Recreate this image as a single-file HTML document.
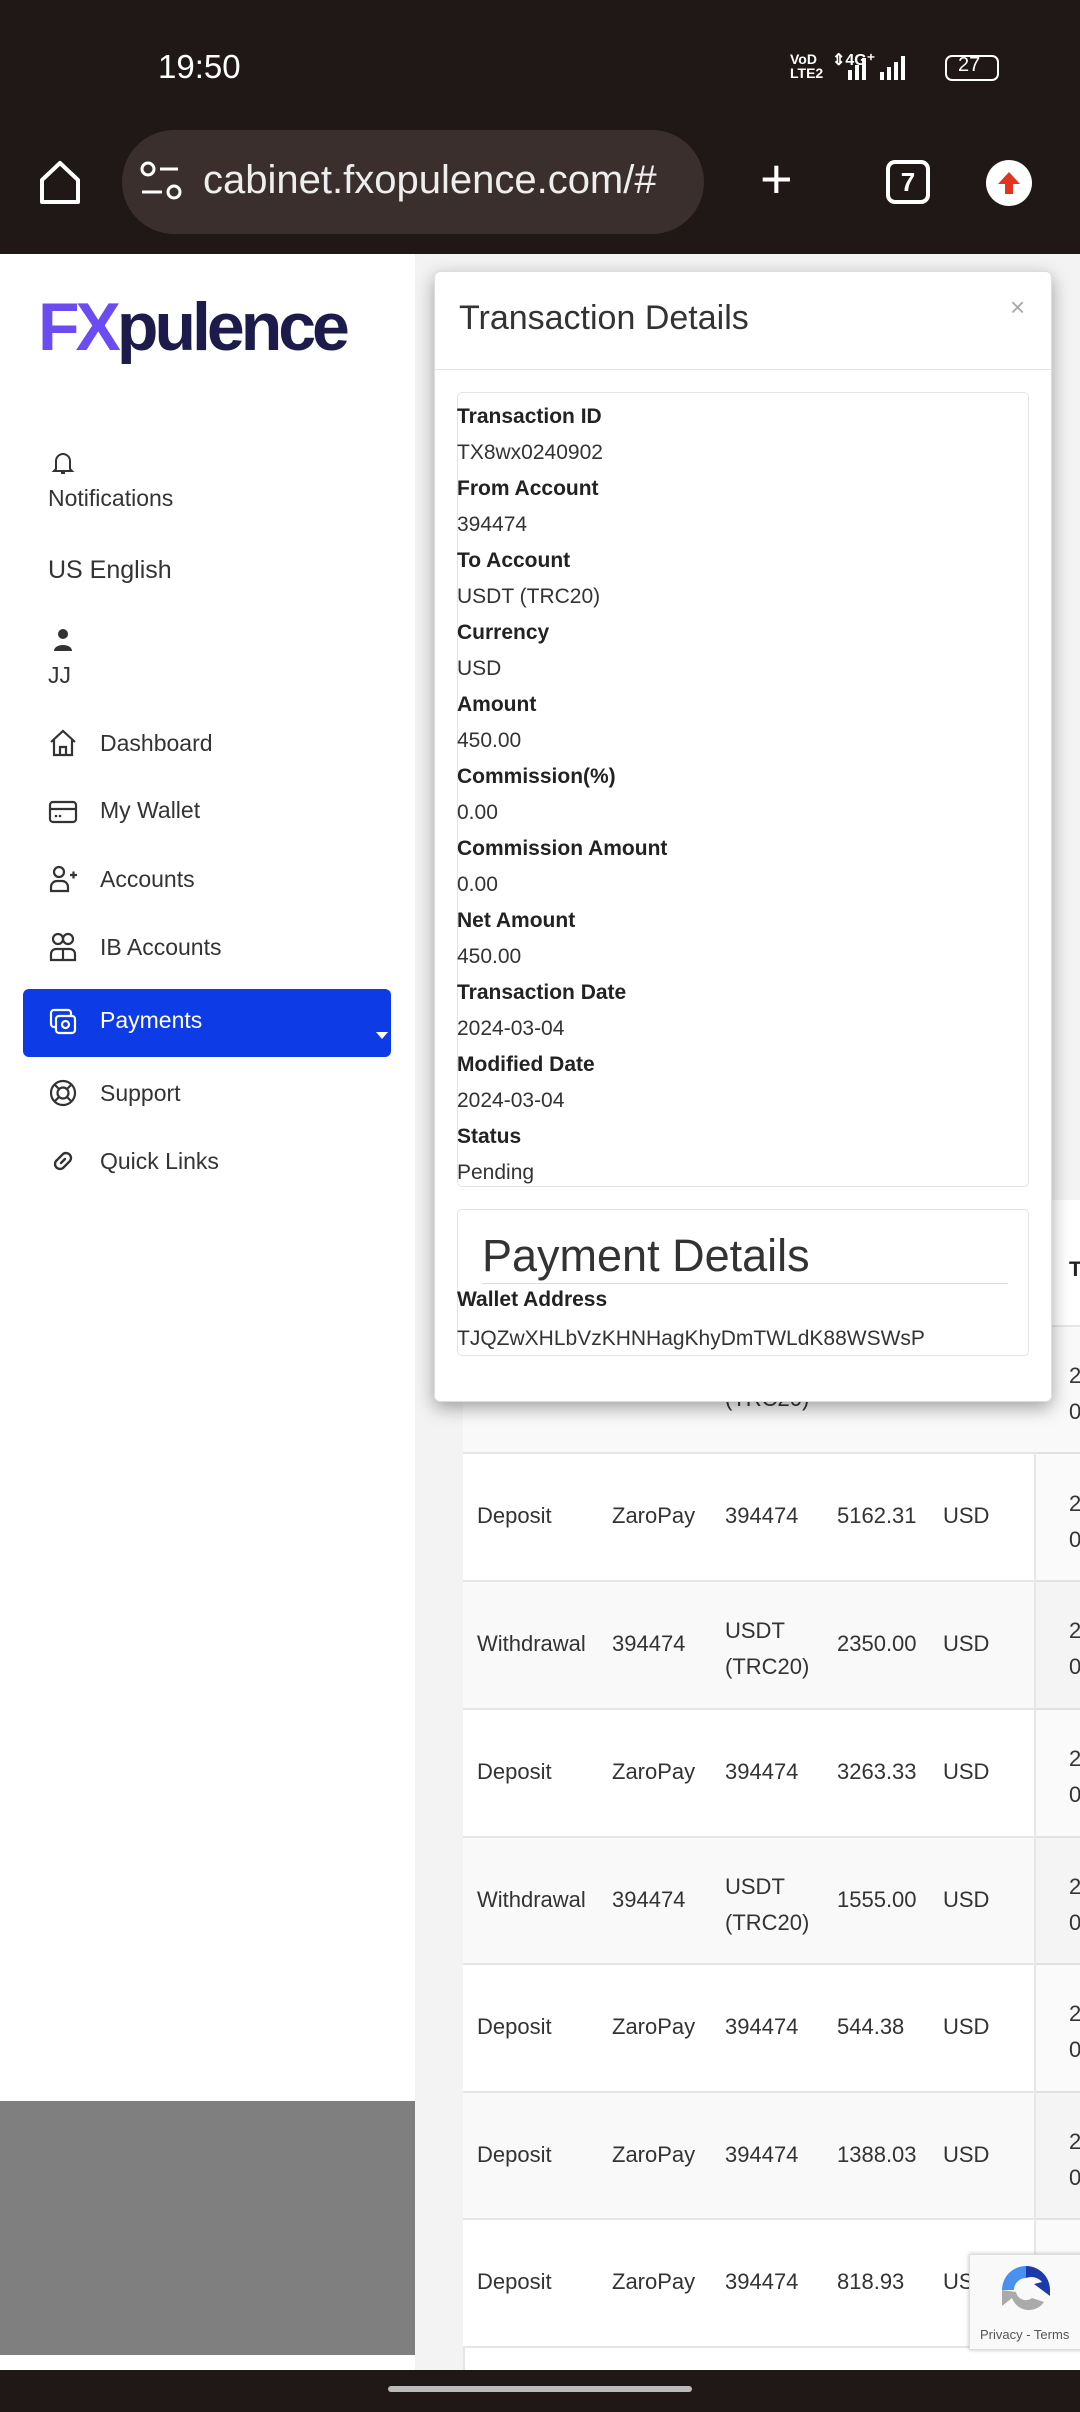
<!DOCTYPE html>
<html><head><meta charset="utf-8"><style>
*{margin:0;padding:0;box-sizing:border-box}
body{width:1080px;height:2412px;position:relative;overflow:hidden;background:#f3f3f3;font-family:"Liberation Sans",sans-serif;color:#333}
.a{position:absolute;white-space:nowrap}
.top{position:absolute;left:0;top:0;width:1080px;height:254px;background:#1f1816}
.side{position:absolute;left:0;top:254px;width:415px;height:2116px;background:#fff}
.nav{font-size:23px;color:#333}
.ic{position:absolute;left:48px;width:30px;height:30px}
.modal{position:absolute;left:434px;top:271px;width:618px;height:1131px;background:#fff;border:1px solid #ddd;border-radius:6px;box-shadow:0 6px 18px rgba(0,0,0,.35)}
.lbl{font-weight:bold;font-size:21px;color:#222}
.val{font-size:21px;color:#333}
.td{font-size:22px;color:#333}
.row{position:absolute;left:463px;width:640px;height:128px;border-top:2px solid #e6e6e6}
</style></head><body>
<div class="top"></div>
<div class="a" style="left:158px;top:48px;font-size:33px;color:#fff">19:50</div>
<div class="a" style="left:790px;top:52px;font-size:14px;color:#fff;line-height:14px;font-weight:bold">VoD<br>LTE2</div>
<div class="a" style="left:832px;top:50px;font-size:16px;color:#fff;font-weight:bold">⇕4G⁺</div>
<svg class="a" style="left:832px;top:52px" width="170" height="30"><g fill="#fff"><rect x="16" y="18" width="4" height="10"/><rect x="23" y="13" width="4" height="15"/><rect x="30" y="6" width="4" height="22"/><rect x="48" y="20" width="4" height="8"/><rect x="55" y="15" width="4" height="13"/><rect x="62" y="10" width="4" height="18"/><rect x="69" y="4" width="4" height="24"/></g><rect x="114" y="4" width="52" height="24" rx="6" fill="none" stroke="#fff" stroke-width="2"/></svg>
<div class="a" style="left:958px;top:54px;font-size:20px;color:#fff">27</div>
<svg class="a" style="left:36px;top:158px" width="50" height="50"><path d="M6 22 L24 5 L42 22 V44 H6 Z" fill="none" stroke="#fff" stroke-width="4" stroke-linejoin="round"/></svg>
<div class="a" style="left:122px;top:130px;width:582px;height:104px;border-radius:52px;background:#3a2f2c"></div>
<svg class="a" style="left:138px;top:160px" width="50" height="45"><circle cx="10" cy="9" r="6" fill="none" stroke="#fff" stroke-width="3"/><path d="M22 9h18M4 32h20" stroke="#fff" stroke-width="3"/><circle cx="36" cy="32" r="6" fill="none" stroke="#fff" stroke-width="3"/></svg>
<div class="a" style="left:203px;top:158px;font-size:40px;color:#eee">cabinet.fxopulence.com/#</div>
<div class="a" style="left:760px;top:146px;font-size:56px;color:#fff;font-weight:300">+</div>
<div class="a" style="left:886px;top:160px;width:44px;height:44px;border:4px solid #fff;border-radius:9px;color:#fff;font-size:26px;text-align:center;line-height:36px;font-weight:bold">7</div>
<div class="a" style="left:986px;top:160px;width:46px;height:46px;border-radius:50%;background:#fff"></div>
<svg class="a" style="left:996px;top:170px" width="26" height="26"><path d="M13 2 L24 14 H17 V24 H9 V14 H2 Z" fill="#e53322"/></svg>

<div class="side"></div>
<div class="a" style="left:0;top:2101px;width:415px;height:254px;background:#7f7f7f"></div>

<div class="a" style="left:38px;top:288px;font-size:68px;font-weight:bold;letter-spacing:-4px"><span style="color:#6a4cf2">FX</span><span style="color:#1d1b4b">pulence</span></div>

<svg class="ic" style="top:448px" viewBox="0 0 30 30"><path d="M8 21V13a7 7 0 0114 0v8l2 2H6z M13 25h4" fill="none" stroke="#333" stroke-width="2"/></svg>
<div class="a nav" style="left:48px;top:485px">Notifications</div>
<div class="a nav" style="left:48px;top:556px;font-size:25px">US English</div>
<svg class="ic" style="top:625px" viewBox="0 0 30 30"><circle cx="15" cy="9" r="5" fill="#333"/><path d="M6 26c0-8 18-8 18 0z" fill="#333"/></svg>
<div class="a nav" style="left:48px;top:662px">JJ</div>

<svg class="ic" style="top:728px" viewBox="0 0 30 30"><path d="M3 14L15 3l12 11M6 12v15h18V12M12 27v-8h6v8" fill="none" stroke="#333" stroke-width="2.2"/></svg>
<div class="a nav" style="left:100px;top:730px">Dashboard</div>
<svg class="ic" style="top:797px" viewBox="0 0 30 30"><rect x="2" y="5" width="26" height="20" rx="3" fill="none" stroke="#333" stroke-width="2.2"/><path d="M2 12h26" stroke="#333" stroke-width="2.2"/><circle cx="8" cy="19" r="1.3" fill="#333"/><circle cx="12" cy="19" r="1.3" fill="#333"/></svg>
<div class="a nav" style="left:100px;top:797px">My Wallet</div>
<svg class="ic" style="top:864px" viewBox="0 0 30 30"><circle cx="11" cy="8" r="5" fill="none" stroke="#333" stroke-width="2.2"/><path d="M3 27v-4a6 6 0 016-6h5a6 6 0 016 6v4zM22 11h7M25.5 7.5v7" fill="none" stroke="#333" stroke-width="2.2"/></svg>
<div class="a nav" style="left:100px;top:866px">Accounts</div>
<svg class="ic" style="top:932px" viewBox="0 0 30 30"><circle cx="10" cy="7" r="5" fill="none" stroke="#333" stroke-width="2.2"/><circle cx="20" cy="7" r="5" fill="none" stroke="#333" stroke-width="2.2"/><path d="M3 28v-6a5 5 0 015-5h14a5 5 0 015 5v6zM15 17v11" fill="none" stroke="#333" stroke-width="2.2"/></svg>
<div class="a nav" style="left:100px;top:934px">IB Accounts</div>
<div class="a" style="left:23px;top:989px;width:368px;height:68px;background:#0d3be6;border-radius:6px"></div>
<svg class="ic" style="top:1007px" viewBox="0 0 30 30"><rect x="3" y="3" width="20" height="17" rx="3" fill="none" stroke="#fff" stroke-width="2.2"/><rect x="8" y="9" width="19" height="17" rx="3" fill="#0d3be6" stroke="#fff" stroke-width="2.2"/><circle cx="17.5" cy="17.5" r="3.5" fill="none" stroke="#fff" stroke-width="2.2"/></svg>
<div class="a nav" style="left:100px;top:1007px;color:#fff">Payments</div>
<svg class="a" style="left:376px;top:1032px" width="12" height="8"><path d="M0 0h12L6 7z" fill="#fff"/></svg>
<svg class="ic" style="top:1078px" viewBox="0 0 30 30"><circle cx="15" cy="15" r="12" fill="none" stroke="#333" stroke-width="2.2"/><circle cx="15" cy="15" r="5.5" fill="none" stroke="#333" stroke-width="2.2"/><path d="M7 7l4 4M23 7l-4 4M7 23l4-4M23 23l-4-4" stroke="#333" stroke-width="2.2"/></svg>
<div class="a nav" style="left:100px;top:1080px">Support</div>
<svg class="ic" style="top:1146px" viewBox="0 0 30 30"><path d="M13 17l4-4M11 12l4-4a5 5 0 017 7l-4 4M19 18l-4 4a5 5 0 01-7-7l4-4" fill="none" stroke="#333" stroke-width="2.4" stroke-linecap="round"/></svg>
<div class="a nav" style="left:100px;top:1148px">Quick Links</div>

<!-- table -->
<div class="a" style="left:463px;top:1200px;width:617px;height:1170px;background:#fff;border-left:2px solid #e6e6e6"></div>
<div class="a lbl" style="left:1069px;top:1258px">T</div>
<div class="row" style="top:1325px;background:#f9f9f9"></div>
<div class="a td" style="left:725px;top:1386px">(TRC20)</div>
<div class="a td" style="left:1069px;top:1358px;line-height:36px">2<br>0</div>

<div class="row" style="top:1452px;background:#fff"></div>
<div class="row" style="top:1580px;background:#f9f9f9"></div>
<div class="row" style="top:1708px;background:#fff"></div>
<div class="row" style="top:1836px;background:#f9f9f9"></div>
<div class="row" style="top:1963px;background:#fff"></div>
<div class="row" style="top:2091px;background:#f9f9f9"></div>
<div class="row" style="top:2218px;background:#fff"></div>
<div class="a" style="left:463px;top:2346px;width:640px;height:2px;background:#e6e6e6"></div>
<div class="a" style="left:1034px;top:1452px;width:46px;height:894px;border-left:2px solid #e6e6e6;background:rgba(0,0,0,.02)"></div>

<div class="a td" style="left:477px;top:1503px">Deposit</div><div class="a td" style="left:612px;top:1503px">ZaroPay</div><div class="a td" style="left:725px;top:1503px">394474</div><div class="a td" style="left:837px;top:1503px">5162.31</div><div class="a td" style="left:943px;top:1503px">USD</div><div class="a td" style="left:1069px;top:1486px;line-height:36px">2<br>0</div>
<div class="a td" style="left:477px;top:1631px">Withdrawal</div><div class="a td" style="left:612px;top:1631px">394474</div><div class="a td" style="left:725px;top:1613px;line-height:36px">USDT<br>(TRC20)</div><div class="a td" style="left:837px;top:1631px">2350.00</div><div class="a td" style="left:943px;top:1631px">USD</div><div class="a td" style="left:1069px;top:1613px;line-height:36px">2<br>0</div>
<div class="a td" style="left:477px;top:1759px">Deposit</div><div class="a td" style="left:612px;top:1759px">ZaroPay</div><div class="a td" style="left:725px;top:1759px">394474</div><div class="a td" style="left:837px;top:1759px">3263.33</div><div class="a td" style="left:943px;top:1759px">USD</div><div class="a td" style="left:1069px;top:1741px;line-height:36px">2<br>0</div>
<div class="a td" style="left:477px;top:1887px">Withdrawal</div><div class="a td" style="left:612px;top:1887px">394474</div><div class="a td" style="left:725px;top:1869px;line-height:36px">USDT<br>(TRC20)</div><div class="a td" style="left:837px;top:1887px">1555.00</div><div class="a td" style="left:943px;top:1887px">USD</div><div class="a td" style="left:1069px;top:1869px;line-height:36px">2<br>0</div>
<div class="a td" style="left:477px;top:2014px">Deposit</div><div class="a td" style="left:612px;top:2014px">ZaroPay</div><div class="a td" style="left:725px;top:2014px">394474</div><div class="a td" style="left:837px;top:2014px">544.38</div><div class="a td" style="left:943px;top:2014px">USD</div><div class="a td" style="left:1069px;top:1996px;line-height:36px">2<br>0</div>
<div class="a td" style="left:477px;top:2142px">Deposit</div><div class="a td" style="left:612px;top:2142px">ZaroPay</div><div class="a td" style="left:725px;top:2142px">394474</div><div class="a td" style="left:837px;top:2142px">1388.03</div><div class="a td" style="left:943px;top:2142px">USD</div><div class="a td" style="left:1069px;top:2124px;line-height:36px">2<br>0</div>
<div class="a td" style="left:477px;top:2269px">Deposit</div><div class="a td" style="left:612px;top:2269px">ZaroPay</div><div class="a td" style="left:725px;top:2269px">394474</div><div class="a td" style="left:837px;top:2269px">818.93</div><div class="a td" style="left:943px;top:2269px">USD</div>

<!-- recaptcha -->
<div class="a" style="left:969px;top:2254px;width:120px;height:96px;background:#f9f9f9;border:1px solid #ddd;box-shadow:0 0 4px rgba(0,0,0,.25)"></div>
<svg class="a" style="left:994px;top:2262px" width="64" height="60"><path d="M32 4 A24 24 0 0 0 8 28 H20 A12 12 0 0 1 32 16Z" fill="#4a90f0"/><path d="M32 4 A24 24 0 0 1 56 28 L56 34 L40 22 L48 20 A14 14 0 0 0 32 16Z" fill="#1c3aa9"/><path d="M8 28 V44 L18 36 A18 18 0 0 0 50 40 L38 36 A10 10 0 0 1 22 30Z" fill="#aaa"/></svg>
<div class="a" style="left:980px;top:2327px;font-size:13px;color:#555">Privacy - Terms</div>

<!-- modal -->
<div class="modal">
<div class="a" style="left:24px;top:27px;font-size:34px;color:#333">Transaction Details</div>
<div class="a" style="left:575px;top:20px;font-size:26px;color:#aaa">×</div>
<div class="a" style="left:0;top:97px;width:616px;height:1px;background:#e5e5e5"></div>
<div class="a" style="left:22px;top:120px;width:572px;height:795px;border:1px solid #e3e3e3;border-radius:5px"></div>
<div class="a" style="left:22px;top:127px;line-height:36px">
<div class="lbl">Transaction ID</div><div class="val">TX8wx0240902</div>
<div class="lbl">From Account</div><div class="val">394474</div>
<div class="lbl">To Account</div><div class="val">USDT (TRC20)</div>
<div class="lbl">Currency</div><div class="val">USD</div>
<div class="lbl">Amount</div><div class="val">450.00</div>
<div class="lbl">Commission(%)</div><div class="val">0.00</div>
<div class="lbl">Commission Amount</div><div class="val">0.00</div>
<div class="lbl">Net Amount</div><div class="val">450.00</div>
<div class="lbl">Transaction Date</div><div class="val">2024-03-04</div>
<div class="lbl">Modified Date</div><div class="val">2024-03-04</div>
<div class="lbl">Status</div><div class="val">Pending</div>
</div>
<div class="a" style="left:22px;top:937px;width:572px;height:147px;border:1px solid #e3e3e3;border-radius:5px"></div>
<div class="a" style="left:47px;top:958px;font-size:45px;color:#333">Payment Details</div>
<div class="a" style="left:47px;top:1011px;width:526px;height:1px;background:#ddd"></div>
<div class="a lbl" style="left:22px;top:1016px">Wallet Address</div>
<div class="a val" style="left:22px;top:1055px">TJQZwXHLbVzKHNHagKhyDmTWLdK88WSWsP</div>
</div>

<div class="a" style="left:0;top:2370px;width:1080px;height:42px;background:#1f1816"></div>
<div class="a" style="left:388px;top:2386px;width:304px;height:6px;border-radius:3px;background:#bbb"></div>
</body></html>
